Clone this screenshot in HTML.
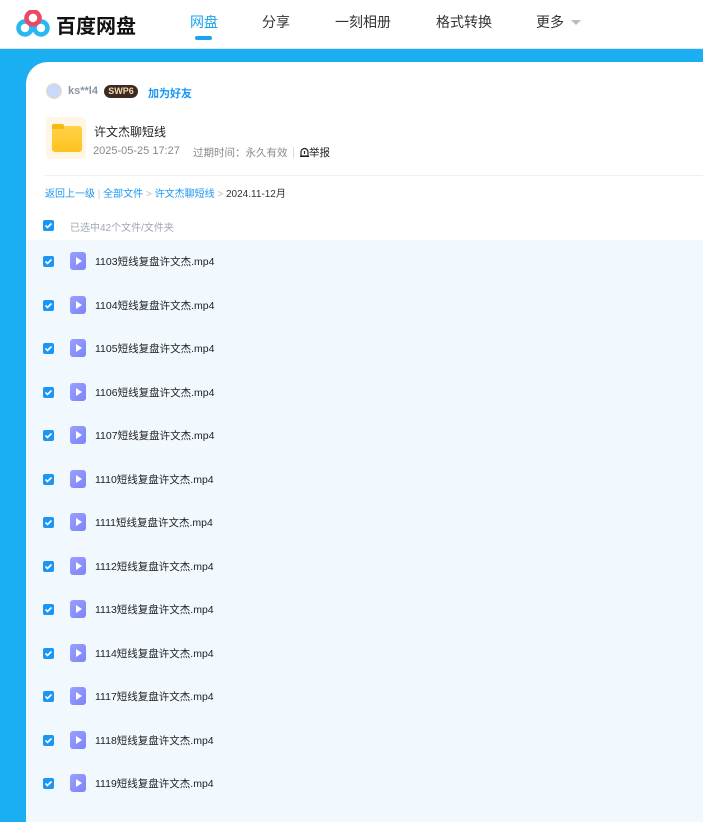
<!DOCTYPE html>
<html><head><meta charset="utf-8"><style>
*{margin:0;padding:0;box-sizing:border-box}
body{width:703px;height:797px;overflow:hidden;background:#1aaff3;font-family:"Liberation Sans","Noto Sans CJK SC",sans-serif;position:relative}
.hdr{position:absolute;left:0;top:0;width:703px;height:49px;background:#fff;border-bottom:1px solid #dfe6ee}
.nav{position:absolute;top:12px;font-size:14px;color:#333}
.card{position:absolute;left:26px;top:62px;width:700px;height:760px;background:#fff;border-top-left-radius:22px;overflow:hidden}
.rows{position:absolute;left:0;top:178px;width:700px;height:600px;background:#f1f8fe}
.cb{position:absolute;width:11px;height:11px;border-radius:2px;background:#1a97f5}
.cb svg{position:absolute;left:1px;top:1px}
.row{position:absolute;left:0;height:20px;width:600px}
.ico{position:absolute;left:44px;top:0;width:16px;height:18px;border-radius:3px;background:linear-gradient(135deg,#9a9ffe,#7c84f8)}
.ico:after{content:"";position:absolute;left:6px;top:5px;border-left:6px solid #fff;border-top:4px solid transparent;border-bottom:4px solid transparent}
.nm{position:absolute;left:69px;top:2px;font-size:10.5px;color:#222}
</style></head><body>
<div class="hdr">
<svg style="position:absolute;left:16px;top:10px" width="34" height="27" viewBox="0 0 34 27">
<circle cx="9" cy="18" r="6.5" fill="none" stroke="#27b8f4" stroke-width="4.5"/>
<circle cx="25" cy="18" r="6.5" fill="none" stroke="#27b8f4" stroke-width="4.5"/>
<circle cx="17" cy="8" r="6.5" fill="none" stroke="#ee4763" stroke-width="4.5"/>
</svg>
<div style="position:absolute;left:56px;top:10px;font-size:20px;font-weight:bold;color:#111">百度网盘</div>
<div class="nav" style="left:190px;color:#1aa3ee">网盘</div>
<div style="position:absolute;left:195px;top:36px;width:17px;height:4px;border-radius:2px;background:#1aa3ee"></div>
<div class="nav" style="left:262px">分享</div>
<div class="nav" style="left:335px">一刻相册</div>
<div class="nav" style="left:436px">格式转换</div>
<div class="nav" style="left:536px">更多</div>
<div style="position:absolute;left:571px;top:20px;border-top:5px solid #bbb;border-left:5px solid transparent;border-right:5px solid transparent"></div>
</div>
<div class="card">
<div style="position:absolute;left:20px;top:21px;width:16px;height:16px;border-radius:50%;background:#c9d8fb;border:1px solid #f3dcb0"></div>
<div style="position:absolute;left:42px;top:23px;font-size:11px;font-weight:bold;color:#8a93a6">ks**l4</div>
<div style="position:absolute;left:78px;top:23px;width:34px;height:13px;border-radius:7px;background:#3d2b22;color:#f5d9b5;font-size:9px;font-weight:bold;text-align:center;line-height:13px">SWP6</div>
<div style="position:absolute;left:122px;top:23px;font-size:11px;font-weight:bold;color:#1a97f5">加为好友</div>
<div style="position:absolute;left:20px;top:55px;width:40px;height:42px;border-radius:4px;background:#fff6e6"></div>
<div style="position:absolute;left:26px;top:64px;width:30px;height:26px;border-radius:3px;background:linear-gradient(#ffd24a,#ffc21f)"></div>
<div style="position:absolute;left:26px;top:62px;width:12px;height:5px;border-radius:2px 2px 0 0;background:#f8b80e"></div>
<div style="position:absolute;left:68px;top:61px;font-size:12px;color:#222">许文杰聊短线</div>
<div style="position:absolute;left:67px;top:83px;font-size:11px;color:#888">2025-05-25 17:27</div>
<div style="position:absolute;left:167px;top:83px;font-size:10.5px;color:#888">过期时间：永久有效</div>
<div style="position:absolute;left:267px;top:85px;width:1px;height:11px;background:#ddd"></div>
<svg style="position:absolute;left:274px;top:85px" width="9" height="10" viewBox="0 0 9 10"><path d="M1 9V5a3.5 3.5 0 0 1 7 0v4zM0 9.5h9M4.5 4v3" stroke="#222" stroke-width="1.2" fill="none"/></svg>
<div style="position:absolute;left:283px;top:83px;font-size:10.5px;color:#222">举报</div>
<div style="position:absolute;left:18px;top:113px;width:700px;height:1px;background:#eef0f3"></div>
<div style="position:absolute;left:19px;top:123px;font-size:10px;color:#1a97f5">返回上一级 <span style="color:#ccc">|</span> 全部文件 <span style="color:#bbb">&gt;</span> 许文杰聊短线 <span style="color:#bbb">&gt;</span> <span style="color:#333">2024.11-12月</span></div>
<div class="cb" style="left:17px;top:158px"><svg width="9" height="9" viewBox="0 0 9 9"><path d="M1.5 4.5l2 2 4-4" stroke="#fff" stroke-width="1.6" fill="none"/></svg></div>
<div style="position:absolute;left:44px;top:157px;font-size:10px;color:#a0a7b3">已选中42个文件/文件夹</div>
<div class="rows">
<div class="row" style="top:12px"><div class="cb" style="left:17px;top:4px"><svg width="9" height="9" viewBox="0 0 9 9"><path d="M1.5 4.5l2 2 4-4" stroke="#fff" stroke-width="1.6" fill="none"/></svg></div><div class="ico"></div><div class="nm">1103短线复盘许文杰.mp4</div></div>
<div class="row" style="top:55.5px"><div class="cb" style="left:17px;top:4px"><svg width="9" height="9" viewBox="0 0 9 9"><path d="M1.5 4.5l2 2 4-4" stroke="#fff" stroke-width="1.6" fill="none"/></svg></div><div class="ico"></div><div class="nm">1104短线复盘许文杰.mp4</div></div>
<div class="row" style="top:99px"><div class="cb" style="left:17px;top:4px"><svg width="9" height="9" viewBox="0 0 9 9"><path d="M1.5 4.5l2 2 4-4" stroke="#fff" stroke-width="1.6" fill="none"/></svg></div><div class="ico"></div><div class="nm">1105短线复盘许文杰.mp4</div></div>
<div class="row" style="top:142.5px"><div class="cb" style="left:17px;top:4px"><svg width="9" height="9" viewBox="0 0 9 9"><path d="M1.5 4.5l2 2 4-4" stroke="#fff" stroke-width="1.6" fill="none"/></svg></div><div class="ico"></div><div class="nm">1106短线复盘许文杰.mp4</div></div>
<div class="row" style="top:186px"><div class="cb" style="left:17px;top:4px"><svg width="9" height="9" viewBox="0 0 9 9"><path d="M1.5 4.5l2 2 4-4" stroke="#fff" stroke-width="1.6" fill="none"/></svg></div><div class="ico"></div><div class="nm">1107短线复盘许文杰.mp4</div></div>
<div class="row" style="top:229.5px"><div class="cb" style="left:17px;top:4px"><svg width="9" height="9" viewBox="0 0 9 9"><path d="M1.5 4.5l2 2 4-4" stroke="#fff" stroke-width="1.6" fill="none"/></svg></div><div class="ico"></div><div class="nm">1110短线复盘许文杰.mp4</div></div>
<div class="row" style="top:273px"><div class="cb" style="left:17px;top:4px"><svg width="9" height="9" viewBox="0 0 9 9"><path d="M1.5 4.5l2 2 4-4" stroke="#fff" stroke-width="1.6" fill="none"/></svg></div><div class="ico"></div><div class="nm">1111短线复盘许文杰.mp4</div></div>
<div class="row" style="top:316.5px"><div class="cb" style="left:17px;top:4px"><svg width="9" height="9" viewBox="0 0 9 9"><path d="M1.5 4.5l2 2 4-4" stroke="#fff" stroke-width="1.6" fill="none"/></svg></div><div class="ico"></div><div class="nm">1112短线复盘许文杰.mp4</div></div>
<div class="row" style="top:360px"><div class="cb" style="left:17px;top:4px"><svg width="9" height="9" viewBox="0 0 9 9"><path d="M1.5 4.5l2 2 4-4" stroke="#fff" stroke-width="1.6" fill="none"/></svg></div><div class="ico"></div><div class="nm">1113短线复盘许文杰.mp4</div></div>
<div class="row" style="top:403.5px"><div class="cb" style="left:17px;top:4px"><svg width="9" height="9" viewBox="0 0 9 9"><path d="M1.5 4.5l2 2 4-4" stroke="#fff" stroke-width="1.6" fill="none"/></svg></div><div class="ico"></div><div class="nm">1114短线复盘许文杰.mp4</div></div>
<div class="row" style="top:447px"><div class="cb" style="left:17px;top:4px"><svg width="9" height="9" viewBox="0 0 9 9"><path d="M1.5 4.5l2 2 4-4" stroke="#fff" stroke-width="1.6" fill="none"/></svg></div><div class="ico"></div><div class="nm">1117短线复盘许文杰.mp4</div></div>
<div class="row" style="top:490.5px"><div class="cb" style="left:17px;top:4px"><svg width="9" height="9" viewBox="0 0 9 9"><path d="M1.5 4.5l2 2 4-4" stroke="#fff" stroke-width="1.6" fill="none"/></svg></div><div class="ico"></div><div class="nm">1118短线复盘许文杰.mp4</div></div>
<div class="row" style="top:534px"><div class="cb" style="left:17px;top:4px"><svg width="9" height="9" viewBox="0 0 9 9"><path d="M1.5 4.5l2 2 4-4" stroke="#fff" stroke-width="1.6" fill="none"/></svg></div><div class="ico"></div><div class="nm">1119短线复盘许文杰.mp4</div></div>
</div>
</div>
</body></html>
